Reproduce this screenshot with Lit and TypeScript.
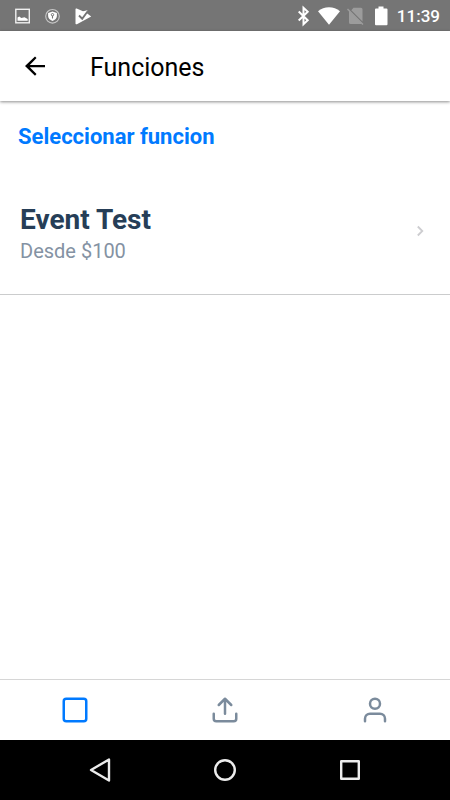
import { LitElement, html, css, svg } from "lit";
import { customElement, property } from "lit/decorators.js";

const tabs = [
  {
    label: "Funciones",
    active: true,
    icon: svg`<rect x="3" y="3" width="18" height="18" rx="2"></rect>`,
  },
  {
    label: "Compartir",
    active: false,
    icon: svg`<path d="M21 15v4a2 2 0 0 1-2 2H5a2 2 0 0 1-2-2v-4M17 8l-5-5-5 5M12 3v12"></path>`,
  },
  {
    label: "Perfil",
    active: false,
    icon: svg`<path d="M20 21v-2a4 4 0 0 0-4-4H8a4 4 0 0 0-4 4v2"></path><circle cx="12" cy="7" r="4"></circle>`,
  },
];

const systemKeys = [
  { label: "Atrás", icon: svg`<path d="M24 4.500V25.500L6 15Z"></path>` },
  { label: "Inicio", icon: svg`<circle cx="15" cy="15" r="9.800"></circle>` },
  { label: "Recientes", icon: svg`<rect x="6.200" y="6.200" width="17.600" height="17.600"></rect>` },
];

@customElement("status-bar")
class StatusBar extends LitElement {
  static styles = css`
    :host {
      display: flex;
      align-items: center;
      justify-content: space-between;
      height: 31px;
      padding: 0 10px 0 12px;
      background: #757575;
      color: #fff;
    }
    .group {
      display: flex;
      align-items: center;
      gap: 10px;
    }
    .right {
      gap: 6px;
    }
    svg {
      display: block;
      width: 20px;
      height: 20px;
      overflow: visible;
    }
    time {
      font-size: 17px;
      line-height: 24px;
      font-weight: 500;
    }
  `;
  render() {
    return html`
      <div class="group">
        <svg viewBox="0 0 20 20" fill="none" aria-hidden="true">
          <rect x="3.800" y="3.300" width="13.500" height="13.500" stroke="#f0f0f0" stroke-width="1.400"></rect>
          <path d="M5.500 14.800v-3.300l1.800-1 2 1.500 3.200-.8 3.200 1.800v1.800z" fill="#fff"></path>
        </svg>
        <svg viewBox="0 0 20 20" fill="none" aria-hidden="true">
          <circle cx="10.500" cy="10.300" r="6.800" stroke="#c8c8c8" stroke-width="1.100"></circle>
          <path d="M10.500 5.600l4.400 1.400v3c0 2.200-1.800 3.900-4.400 4.900-2.600-1-4.400-2.700-4.400-4.900V7z" fill="#fff"></path>
          <circle cx="10.500" cy="8.700" r="1.200" stroke="#757575" stroke-width="1"></circle>
          <path d="M10.500 9.800v2.700" stroke="#757575" stroke-width="1.100"></path>
        </svg>
        <svg viewBox="0 0 20 20" fill="none" aria-hidden="true">
          <path d="M3.500 3.300q0-1.200 1.200-.7L11 5.200l4.400-1-.8 2.800 4.600 3.500L4.900 18.200q-1.600.6-1.400-1z" fill="#fff"></path>
          <path d="M7 9.500l3.200 3.200L15.500 5.500" stroke="#757575" stroke-width="1.900"></path>
        </svg>
      </div>
      <div class="group right">
        <svg viewBox="0 0 20 20" fill="none" stroke="#fff" stroke-width="2" aria-hidden="true">
          <path d="M5.700 5.500l9 8.700-4.200 4V1.800l4.200 4-9 8.700"></path>
        </svg>
        <svg viewBox="0 0 20 20" aria-hidden="true">
          <path d="M-1 5.200C5-.1 15-.1 21 5.200L10 18.700z" fill="#fff"></path>
        </svg>
        <svg viewBox="0 0 20 20" aria-hidden="true">
          <path d="M8.500 1.800H16q1.500 0 1.500 1.500v12.200L6.300 4.300zM4 4.500L17 17.500 16 18H5.500Q4 18 4 16.500z" fill="#9c9c9c"></path>
          <path d="M2.500 3l15.500 15.500" stroke="#9c9c9c" stroke-width="1.500"></path>
        </svg>
        <svg viewBox="0 0 20 20" aria-hidden="true">
          <path d="M7.500 .5h5v2h3q1 0 1 1v14.800q0 1-1 1H5q-1 0-1-1V3.500q0-1 1-1h2.500z" fill="#fff"></path>
        </svg>
        <time>11:39</time>
      </div>
    `;
  }
}

@customElement("event-row")
class EventRow extends LitElement {
  @property() name = "";
  @property() price = "";
  static styles = css`
    :host {
      display: block;
    }
    button {
      display: flex;
      align-items: center;
      justify-content: space-between;
      width: 100%;
      padding: 32px 20px;
      border: 0;
      border-bottom: 1px solid #cbcccd;
      background: none;
      font: inherit;
      text-align: left;
    }
    .text {
      display: flex;
      flex-direction: column;
    }
    .name {
      font-size: 28px;
      line-height: 40px;
      font-weight: 700;
      color: #263e57;
    }
    .price {
      font-size: 20px;
      line-height: 22px;
      color: #8492a3;
    }
    svg {
      width: 20px;
      height: 20px;
    }
  `;
  render() {
    return html`<button type="button">
      <span class="text">
        <span class="name">${this.name}</span>
        <span class="price">${this.price}</span>
      </span>
      <svg viewBox="0 0 20 20" fill="none" stroke="#cdcdd0" stroke-width="1.800" aria-hidden="true">
        <path d="M7.800 5.500l4.500 4.500-4.500 4.500"></path>
      </svg>
    </button>`;
  }
}

@customElement("app-root")
class AppRoot extends LitElement {
  static styles = css`
    :host {
      display: flex;
      flex-direction: column;
      min-height: 100vh;
      background: #fff;
      font-family: Roboto, sans-serif;
    }
    button {
      display: flex;
      align-items: center;
      justify-content: center;
      padding: 0;
      border: 0;
      background: none;
      color: inherit;
    }
    svg {
      display: block;
      width: 30px;
      height: 30px;
    }
    header {
      display: flex;
      align-items: center;
      gap: 40px;
      height: 70px;
      padding: 0 20px;
      box-shadow: 0 1px 3px rgba(0, 0, 0, 0.45);
      color: #000;
    }
    h1 {
      margin: 0;
      padding-top: 4px;
      font-size: 25px;
      line-height: 32px;
      font-weight: 400;
    }
    main {
      flex: 1;
    }
    h2 {
      margin: 0;
      padding: 22px 18px 17px;
      font-size: 22px;
      line-height: 28px;
      font-weight: 700;
      color: #007aff;
    }
    nav {
      display: grid;
      grid-template-columns: repeat(3, 1fr);
      height: 60px;
      border-top: 1px solid #d6d6d6;
      color: #7b8b9c;
    }
    .active {
      color: #007aff;
    }
    footer {
      display: flex;
      justify-content: center;
      gap: 95px;
      height: 60px;
      background: #000;
      color: #ececec;
    }
  `;
  render() {
    return html`
      <status-bar></status-bar>
      <header>
        <button type="button" aria-label="Volver">
          <svg viewBox="0 0 24 24" fill="currentColor" aria-hidden="true">
            <path d="M20 11.100H7.830l5.390-5.490L12 4.300l-8 7.700 8 7.700 1.210-1.310L7.830 12.900H20v-1.800z"></path>
          </svg>
        </button>
        <h1>Funciones</h1>
      </header>
      <main>
        <h2>Seleccionar funcion</h2>
        <event-row name="Event Test" price="Desde $100"></event-row>
      </main>
      <nav>
        ${tabs.map(
          (tab) => html`<button type="button" class=${tab.active ? "active" : ""} aria-label=${tab.label}>
            <svg
              viewBox="0 0 24 24"
              fill="none"
              stroke="currentColor"
              stroke-width="2"
              stroke-linecap="round"
              stroke-linejoin="round"
              aria-hidden="true"
            >
              ${tab.icon}
            </svg>
          </button>`
        )}
      </nav>
      <footer>
        ${systemKeys.map(
          (key) => html`<button type="button" aria-label=${key.label}>
            <svg viewBox="0 0 30 30" fill="none" stroke="currentColor" stroke-width="2.400" stroke-linejoin="round" aria-hidden="true">
              ${key.icon}
            </svg>
          </button>`
        )}
      </footer>
    `;
  }
}
